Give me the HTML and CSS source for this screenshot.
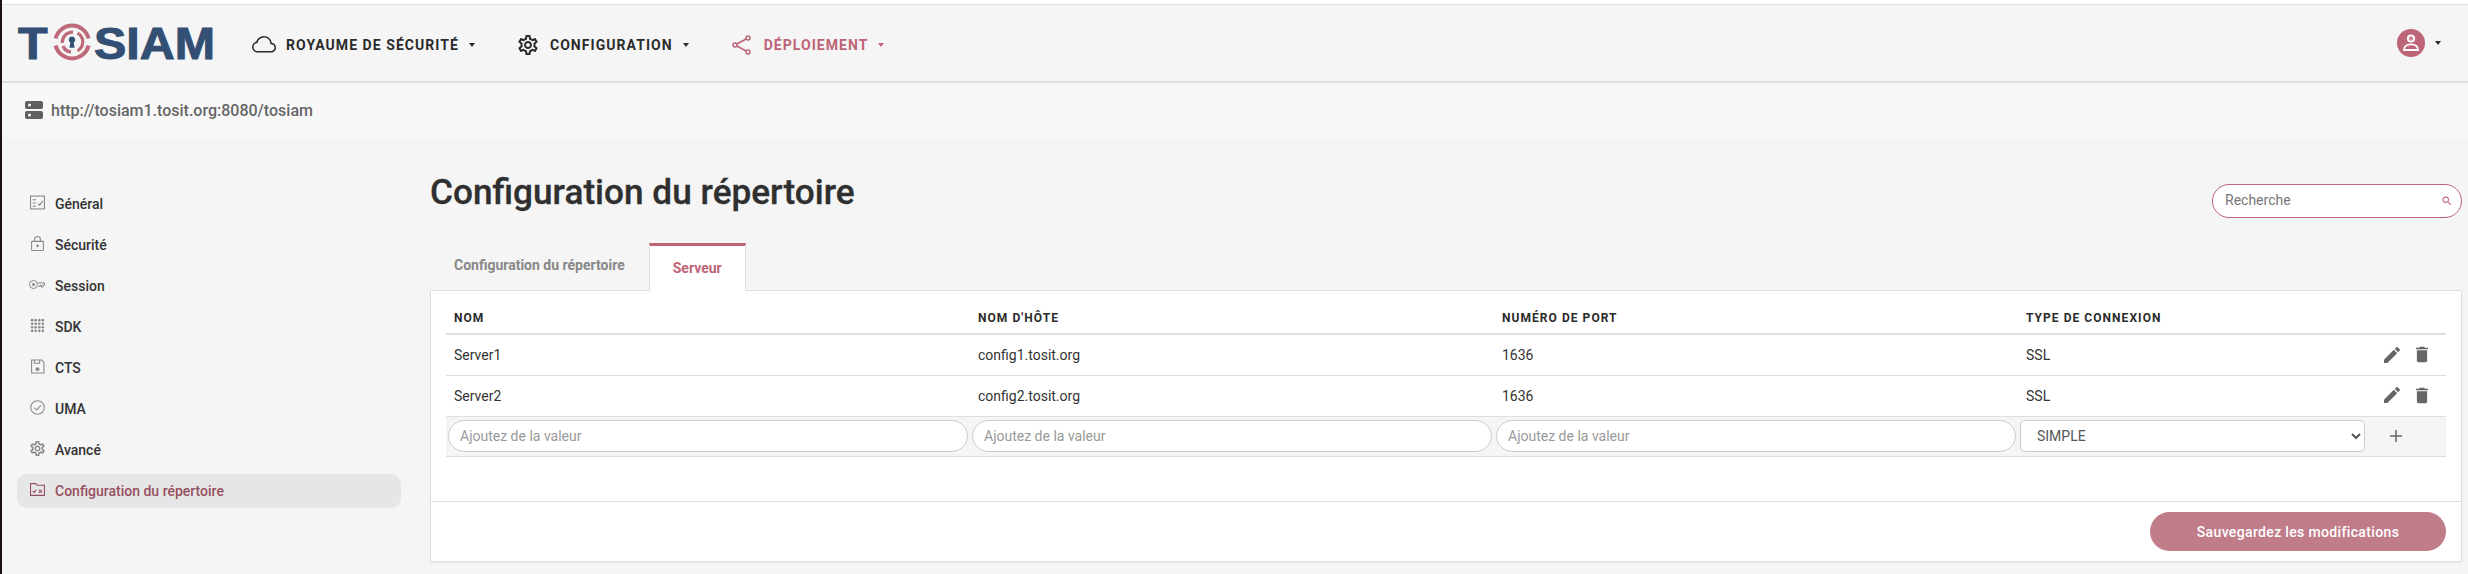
FILE: index.html
```html
<!DOCTYPE html>
<html lang="fr">
<head>
<meta charset="utf-8">
<title>TOSIAM</title>
<link rel="stylesheet" href="styles.css">
</head>
<body>
<div class="page">
  <header class="navbar">
    <a class="logo">
      <span class="logo-text logo-t">T</span>
      <svg class="logo-mark" viewBox="0 0 38 38">
        <g fill="none" stroke="#bf6a7a" stroke-width="4">
          <path d="M2.6 15.5A17 17 0 0 1 35.6 15.5"/>
          <path d="M2.6 22.5A17 17 0 0 0 35.6 22.5"/>
        </g>
        <g fill="none" stroke="#bf6a7a" stroke-width="3.2">
          <path d="M9.4 20A10 10 0 0 1 20 9.1"/>
          <path d="M24.5 10.2A10 10 0 0 1 24.5 27.8"/>
          <path d="M18 29A10 10 0 0 1 9.9 23"/>
        </g>
        <path fill="#334f73" d="M19 13.5a3.3 3.3 0 0 1 1.7 6.1l.8 5.2h-5l.8-5.2a3.3 3.3 0 0 1 1.7-6.1z"/>
      </svg>
      <span class="logo-text logo-rest">SIAM</span>
    </a>
    <nav class="main-nav">
      <a class="nav-item">
        <svg class="nav-icon nav-icon-cloud" viewBox="0 0 16 16"><path fill="currentColor" d="M4.406 3.342A5.53 5.53 0 0 1 8 2c2.69 0 4.923 2 5.166 4.579C14.758 6.804 16 8.137 16 9.773 16 11.569 14.502 13 12.687 13H3.781C1.708 13 0 11.366 0 9.318c0-1.763 1.266-3.223 2.942-3.593.143-.863.698-1.723 1.464-2.383zm.653.757c-.757.653-1.153 1.44-1.153 2.056v.448l-.445.049C2.064 6.805 1 7.952 1 9.318 1 10.785 2.23 12 3.781 12h8.906C13.98 12 15 10.988 15 9.773c0-1.216-1.02-2.228-2.313-2.228h-.5v-.5C12.188 4.825 10.328 3 8 3a4.53 4.53 0 0 0-2.941 1.1z"/></svg>
        <span>ROYAUME DE SÉCURITÉ</span><i class="caret"></i>
      </a>
      <a class="nav-item">
        <svg class="nav-icon" viewBox="2 2 20 20"><path fill="currentColor" d="M19.43 12.98c.04-.32.07-.64.07-.98 0-.34-.03-.66-.07-.98l2.11-1.65c.19-.15.24-.42.12-.64l-2-3.46c-.09-.16-.26-.25-.44-.25-.06 0-.12.01-.17.03l-2.49 1c-.52-.4-1.08-.73-1.69-.98l-.38-2.65C14.46 2.18 14.25 2 14 2h-4c-.25 0-.46.18-.49.42l-.38 2.65c-.61.25-1.17.59-1.69.98l-2.49-1c-.06-.02-.12-.03-.18-.03-.17 0-.34.09-.43.25l-2 3.46c-.13.22-.07.49.12.64l2.11 1.65c-.04.32-.07.65-.07.98 0 .33.03.66.07.98l-2.11 1.65c-.19.15-.24.42-.12.64l2 3.46c.09.16.26.25.44.25.06 0 .12-.01.17-.03l2.49-1c.52.4 1.08.73 1.69.98l.38 2.65c.03.24.24.42.49.42h4c.25 0 .46-.18.49-.42l.38-2.65c.61-.25 1.17-.59 1.69-.98l2.49 1c.06.02.12.03.18.03.17 0 .34-.09.43-.25l2-3.46c.12-.22.07-.49-.12-.64l-2.11-1.65zm-1.98-1.71c.04.31.05.52.05.73 0 .21-.02.43-.05.73l-.14 1.13.89.7 1.08.84-.7 1.21-1.27-.51-1.04-.42-.9.68c-.43.32-.84.56-1.25.73l-1.06.43-.16 1.13-.2 1.35h-1.4l-.19-1.35-.16-1.13-1.06-.43c-.43-.18-.83-.41-1.23-.71l-.91-.7-1.06.43-1.27.51-.7-1.21 1.08-.84.89-.7-.14-1.13c-.03-.31-.05-.54-.05-.74s.02-.43.05-.73l.14-1.13-.89-.7-1.08-.84.7-1.21 1.27.51 1.04.42.9-.68c.43-.32.84-.56 1.25-.73l1.06-.43.16-1.13.2-1.35h1.39l.19 1.35.16 1.13 1.06.43c.43.18.83.41 1.23.71l.91.7 1.06-.43 1.27-.51.7 1.21-1.07.85-.89.7.14 1.13zM12 8c-2.21 0-4 1.79-4 4s1.79 4 4 4 4-1.79 4-4-1.79-4-4-4zm0 6c-1.1 0-2-.9-2-2s.9-2 2-2 2 .9 2 2-.9 2-2 2z"/></svg>
        <span>CONFIGURATION</span><i class="caret"></i>
      </a>
      <a class="nav-item nav-item-active">
        <svg class="nav-icon" viewBox="0 0 20 20"><g fill="none" stroke="currentColor" stroke-width="1.5"><circle cx="16" cy="3" r="2"/><circle cx="3" cy="10" r="2"/><circle cx="16" cy="17" r="2"/><path d="M14.2 4 4.8 9M4.8 11l9.4 5"/></g></svg>
        <span>DÉPLOIEMENT</span><i class="caret"></i>
      </a>
    </nav>
    <div class="user-menu">
      <svg class="avatar" viewBox="0 0 28 28"><circle cx="14" cy="14" r="14" fill="#bd6476"/><circle cx="14" cy="9.5" r="3.2" fill="#c98b98" stroke="#fff" stroke-width="1.8"/><path d="M7 21c0-4 3-5.6 7-5.6s7 1.6 7 5.6z" fill="none" stroke="#fff" stroke-width="1.8"/></svg>
      <i class="caret"></i>
    </div>
  </header>

  <div class="urlbar">
    <svg class="server-icon" viewBox="0 0 18 18"><path fill="#5f5f5f" fill-rule="evenodd" d="M2 0h14a2 2 0 0 1 2 2v4a2 2 0 0 1-2 2H2a2 2 0 0 1-2-2V2a2 2 0 0 1 2-2zm2.5 2.5a1.5 1.5 0 1 0 0 3 1.5 1.5 0 0 0 0-3zM2 10h14a2 2 0 0 1 2 2v4a2 2 0 0 1-2 2H2a2 2 0 0 1-2-2v-4a2 2 0 0 1 2-2zm2.5 2.5a1.5 1.5 0 1 0 0 3 1.5 1.5 0 0 0 0-3z"/></svg>
    <span>http://tosiam1.tosit.org:8080/tosiam</span>
  </div>

  <div class="layout">
    <aside class="sidebar">
      <a class="side-item">
        <svg class="side-icon" viewBox="0 0 14 14"><g fill="none" stroke="currentColor"><rect x=".5" y="1" width="13" height="12"/><path d="M2.5 4.5h3M2.5 7.5h3M2.5 10.5h3M7.5 8l1.5 1.5L12 5.5"/></g></svg>
        <span>Général</span>
      </a>
      <a class="side-item">
        <svg class="side-icon" viewBox="0 0 14 14"><g fill="none" stroke="currentColor"><rect x="1.5" y="5" width="11" height="8.5" rx=".6"/><path d="M4.3 5V3.2a2.7 2.7 0 0 1 5.4 0V5"/></g><circle cx="7" cy="9.2" r="1.2" fill="currentColor"/></svg>
        <span>Sécurité</span>
      </a>
      <a class="side-item">
        <svg class="side-icon side-icon-wide" viewBox="0 0 16 10"><g fill="none" stroke="currentColor"><circle cx="4.5" cy="5" r="4"/><path d="M8.5 3.4h7v2.2h-1.4V7.5h-1.8V5.6h-1.2v1.4H9.2"/></g><circle cx="4.5" cy="5" r="1.5" fill="currentColor"/></svg>
        <span>Session</span>
      </a>
      <a class="side-item">
        <svg class="side-icon" viewBox="0 0 14 14"><g fill="currentColor"><circle cx="2" cy="2" r="1.2"/><circle cx="5.3" cy="2" r="1.2"/><circle cx="8.7" cy="2" r="1.2"/><circle cx="12" cy="2" r="1.2"/><circle cx="2" cy="5.3" r="1.2"/><circle cx="5.3" cy="5.3" r="1.2"/><circle cx="8.7" cy="5.3" r="1.2"/><circle cx="12" cy="5.3" r="1.2"/><circle cx="2" cy="8.7" r="1.2"/><circle cx="5.3" cy="8.7" r="1.2"/><circle cx="8.7" cy="8.7" r="1.2"/><circle cx="12" cy="8.7" r="1.2"/><circle cx="2" cy="12" r="1.2"/><circle cx="5.3" cy="12" r="1.2"/><circle cx="8.7" cy="12" r="1.2"/><circle cx="12" cy="12" r="1.2"/></g></svg>
        <span>SDK</span>
      </a>
      <a class="side-item">
        <svg class="side-icon" viewBox="0 0 14 14"><g fill="none" stroke="currentColor"><path d="M1.500 1h9.500l2 2v10h-11.500z"/><path d="M4 1v3h5V1"/></g><circle cx="7" cy="9.500" r="1.800" fill="currentColor"/></svg>
        <span>CTS</span>
      </a>
      <a class="side-item">
        <svg class="side-icon" viewBox="0 0 14 14"><g fill="none" stroke="currentColor"><circle cx="7" cy="7" r="6.300"/><path d="M4 7.200l2.200 2.200L10.200 5"/></g></svg>
        <span>UMA</span>
      </a>
      <a class="side-item">
        <svg class="side-icon" viewBox="2 2 20 20"><path fill="currentColor" d="M19.43 12.98c.04-.32.07-.64.07-.98 0-.34-.03-.66-.07-.98l2.11-1.65c.19-.15.24-.42.12-.64l-2-3.46c-.09-.16-.26-.25-.44-.25-.06 0-.12.01-.17.03l-2.49 1c-.52-.4-1.08-.73-1.69-.98l-.38-2.65C14.46 2.18 14.25 2 14 2h-4c-.25 0-.46.18-.49.42l-.38 2.65c-.61.25-1.17.59-1.69.98l-2.49-1c-.06-.02-.12-.03-.18-.03-.17 0-.34.09-.43.25l-2 3.46c-.13.22-.07.49.12.64l2.11 1.65c-.04.32-.07.65-.07.98 0 .33.03.66.07.98l-2.11 1.65c-.19.15-.24.42-.12.64l2 3.46c.09.16.26.25.44.25.06 0 .12-.01.17-.03l2.49-1c.52.4 1.08.73 1.69.98l.38 2.65c.03.24.24.42.49.42h4c.25 0 .46-.18.49-.42l.38-2.65c.61-.25 1.17-.59 1.69-.98l2.49 1c.06.02.12.03.18.03.17 0 .34-.09.43-.25l2-3.46c.12-.22.07-.49-.12-.64l-2.11-1.65zm-1.98-1.71c.04.31.05.52.05.73 0 .21-.02.43-.05.73l-.14 1.13.89.7 1.08.84-.7 1.21-1.27-.51-1.04-.42-.9.68c-.43.32-.84.56-1.25.73l-1.06.43-.16 1.13-.2 1.35h-1.4l-.19-1.35-.16-1.13-1.06-.43c-.43-.18-.83-.41-1.23-.71l-.91-.7-1.06.43-1.27.51-.7-1.21 1.08-.84.89-.7-.14-1.13c-.03-.31-.05-.54-.05-.74s.02-.43.05-.73l.14-1.13-.89-.7-1.08-.84.7-1.21 1.27.51 1.04.42.9-.68c.43-.32.84-.56 1.25-.73l1.06-.43.16-1.13.2-1.35h1.39l.19 1.35.16 1.13 1.06.43c.43.18.83.41 1.23.71l.91.7 1.06-.43 1.27-.51.7 1.21-1.07.85-.89.7.14 1.13zM12 8c-2.21 0-4 1.79-4 4s1.79 4 4 4 4-1.79 4-4-1.79-4-4-4zm0 6c-1.1 0-2-.9-2-2s.9-2 2-2 2 .9 2 2-.9 2-2 2z"/></svg>
        <span>Avancé</span>
      </a>
      <a class="side-item side-item-active">
        <svg class="side-icon" viewBox="0 0 14 14"><g fill="none" stroke="currentColor"><path d="M.5 12.500V1.500h5l1.200 1.500h6.800v9.500z"/><path d="M2.500 8.500l1.300 1.300 2-2.500M8.300 7.300l2.800 2.800M11.100 7.300l-2.800 2.800"/></g></svg>
        <span>Configuration du répertoire</span>
      </a>
    </aside>

    <main class="content">
      <div class="content-head">
        <h1>Configuration du répertoire</h1>
        <label class="search">
          <input type="text" placeholder="Recherche">
          <svg class="search-icon" viewBox="0 0 24 24"><path fill="currentColor" d="M15.500 14h-.79l-.28-.27A6.471 6.471 0 0 0 16 9.500 6.500 6.500 0 1 0 9.500 16c1.610 0 3.090-.59 4.230-1.570l.27.28v.79l5 4.990L20.490 19l-4.990-5zm-6 0C7.010 14 5 11.990 5 9.500S7.010 5 9.500 5 14 7.010 14 9.500 11.990 14 9.500 14z"/></svg>
        </label>
      </div>
      <div class="tabs">
        <a class="tab">Configuration du répertoire</a>
        <a class="tab tab-active">Serveur</a>
      </div>
      <section class="card">
        <div class="card-body">
          <table class="grid">
            <colgroup>
              <col class="col-main"><col class="col-main"><col class="col-main"><col><col class="col-actions">
            </colgroup>
            <thead>
              <tr><th>NOM</th><th>NOM D'HÔTE</th><th>NUMÉRO DE PORT</th><th>TYPE DE CONNEXION</th><th></th></tr>
            </thead>
            <tbody>
              <tr>
                <td>Server1</td><td>config1.tosit.org</td><td>1636</td><td>SSL</td>
                <td class="actions">
                  <svg class="act-icon" viewBox="3 3 18 18"><path fill="currentColor" d="M3 17.250V21h3.750L17.810 9.940l-3.750-3.750L3 17.250zM20.710 7.040c.39-.39.39-1.020 0-1.410l-2.340-2.340c-.39-.39-1.020-.39-1.410 0l-1.830 1.830 3.750 3.750 1.830-1.830z"/></svg>
                  <svg class="act-icon act-trash" viewBox="5 3 14 18"><path fill="currentColor" d="M6 19c0 1.100.9 2 2 2h8c1.100 0 2-.9 2-2V7H6v12zM19 4h-3.500l-1-1h-5l-1 1H5v2h14V4z"/></svg>
                </td>
              </tr>
              <tr>
                <td>Server2</td><td>config2.tosit.org</td><td>1636</td><td>SSL</td>
                <td class="actions">
                  <svg class="act-icon" viewBox="3 3 18 18"><path fill="currentColor" d="M3 17.250V21h3.750L17.810 9.940l-3.750-3.750L3 17.250zM20.710 7.040c.39-.39.39-1.020 0-1.410l-2.340-2.340c-.39-.39-1.020-.39-1.410 0l-1.830 1.830 3.750 3.750 1.830-1.830z"/></svg>
                  <svg class="act-icon act-trash" viewBox="5 3 14 18"><path fill="currentColor" d="M6 19c0 1.100.9 2 2 2h8c1.100 0 2-.9 2-2V7H6v12zM19 4h-3.500l-1-1h-5l-1 1H5v2h14V4z"/></svg>
                </td>
              </tr>
              <tr class="add-row">
                <td><input class="field" type="text" placeholder="Ajoutez de la valeur"></td>
                <td><input class="field" type="text" placeholder="Ajoutez de la valeur"></td>
                <td><input class="field" type="text" placeholder="Ajoutez de la valeur"></td>
                <td><select class="field-select"><option>SIMPLE</option><option>SSL</option></select></td>
                <td class="actions-add"><svg class="plus-icon" viewBox="0 0 14 14"><path fill="none" stroke="currentColor" stroke-width="1.500" d="M7 1v12M1 7h12"/></svg></td>
              </tr>
            </tbody>
          </table>
        </div>
        <div class="card-footer">
          <button class="save-btn" type="button">Sauvegardez les modifications</button>
        </div>
      </section>
    </main>
  </div>
</div>
</body>
</html>
```

FILE: styles.css
```css
* { box-sizing: border-box; }
html, body { margin: 0; padding: 0; }
body {
  font-family: Roboto, "Liberation Sans", sans-serif;
  background: #fff;
  color: #333;
  height: 574px;
  overflow: hidden;
}
.page {
  border-left: 2px solid #1b1219;
  height: 574px;
  padding-top: 4px;
  background: #f5f5f5 content-box;
  display: flex;
  flex-direction: column;
}
.navbar {
  height: 79px;
  flex: none;
  border-top: 1px solid #e0e0e0;
  border-bottom: 2px solid #dedede;
  background: #f5f5f5;
  display: flex;
  align-items: center;
  padding: 3px 27px 0 16px;
}
.logo {
  display: flex;
  align-items: center;
  width: 234px;
  flex: none;
  color: #334f73;
  margin-top: -2px;
}
.logo-text {
  display: block;
  font-family: "Liberation Sans", Arial, sans-serif;
  font-weight: 700;
  font-size: 44px;
  line-height: 44px;
  -webkit-text-stroke: 1px #334f73;
  transform-origin: left center;
}
.logo-t { width: 35px; flex: none; transform: scaleX(1.1); }
.logo-rest { margin-left: 3px; transform: scaleX(1.1); }
.logo-mark { width: 38px; height: 38px; flex: none; margin-top: -3px; }
.main-nav { display: flex; align-items: center; gap: 43px; flex: 1; }
.nav-item {
  display: flex;
  align-items: center;
  color: #2b2b2b;
  font-size: 14px;
  font-weight: 700;
  letter-spacing: 1.05px;
}
.nav-item-active { color: #bd6476; }
.nav-icon { width: 20px; height: 20px; margin-right: 12px; flex: none; }
.nav-icon-cloud { width: 24px; height: 24px; margin-right: 10px; }
.caret {
  display: block;
  margin-left: 10px;
  width: 0;
  height: 0;
  border-left: 3.5px solid transparent;
  border-right: 3.5px solid transparent;
  border-top: 4px solid currentColor;
}
.user-menu { display: flex; align-items: center; color: #2b2b2b; margin-top: -3px; }
.avatar { width: 28px; height: 28px; }
.user-menu .caret { margin-left: 10px; }
.urlbar {
  height: 55px;
  flex: none;
  background: #f8f8f8;
  display: flex;
  align-items: center;
  padding-left: 23px;
  padding-bottom: 1px;
  color: #666;
  font-size: 16px;
  font-weight: 500;
}
.server-icon { width: 18px; height: 18px; margin-right: 8px; flex: none; }
.layout { flex: 1; display: flex; min-height: 0; }
.sidebar {
  width: 428px;
  flex: none;
  padding: 49px 29px 0 15px;
  display: flex;
  flex-direction: column;
  gap: 7px;
}
.side-item {
  height: 34px;
  display: flex;
  align-items: center;
  padding-left: 13px;
  border-radius: 10px;
  font-size: 14px;
  font-weight: 500;
  color: #333;
}
.side-item > span { margin-left: 10px; }
.side-icon { width: 15px; height: 15px; color: #888; flex: none; margin-top: -4px; }
.side-icon-wide { width: 16px; margin-left: -1px; }
.side-item-active { background: #e6e6e6; color: #964f5f; }
.side-item-active .side-icon { color: #964f5f; }
.content { flex: 1; min-width: 0; padding: 30px 6px 0 0; }
.content-head {
  height: 75px;
  display: flex;
  justify-content: space-between;
  align-items: flex-start;
}
h1 {
  margin: 0;
  font-size: 35.2px;
  line-height: 48px;
  font-weight: 500;
  color: #2f2f2f;
  -webkit-text-stroke: .3px #2f2f2f;
}
.search {
  width: 250px;
  height: 34px;
  margin-top: 16px;
  border: 1px solid #bd6476;
  border-radius: 17px;
  background: #fff;
  display: flex;
  align-items: center;
  padding: 0 8px 0 12px;
  color: #bd6476;
}
.search input {
  flex: 1;
  min-width: 0;
  border: 0;
  outline: 0;
  background: transparent;
  font: 400 14px Roboto, sans-serif;
  margin-top: -2px;
  padding: 0;
}
.search input::placeholder { color: #777; opacity: 1; }
.search-icon { width: 12px; height: 12px; flex: none; }
.tabs { display: flex; height: 47px; position: relative; z-index: 1; }
.tab {
  padding: 12px 24px 0;
  font-size: 14px;
  line-height: 20px;
  font-weight: 700;
  color: #888;
}
.tab-active {
  height: 48px;
  border: 1px solid #dedede;
  border-top: 3px solid #bd6476;
  border-bottom: 0;
  background: #fff;
  padding: 12px 23px 0;
  color: #bd6476;
}
.card {
  height: 272px;
  background: #fff;
  border: 1px solid #dedede;
  box-shadow: 0 1px 2px rgba(0,0,0,.06);
}
.card-body { height: 211px; padding: 0 15px; border-bottom: 1px solid #dedede; }
.grid { width: 100%; table-layout: fixed; border-collapse: collapse; }
.col-main { width: 524px; }
.col-actions { width: 79px; }
.grid th {
  height: 43px;
  padding: 12px 8px 0;
  text-align: left;
  font-size: 12px;
  font-weight: 700;
  letter-spacing: 1.05px;
  color: #2b2b2b;
  border-bottom: 2px solid #dedede;
}
.grid td {
  height: 41px;
  padding: 0 8px;
  font-size: 14px;
  color: #333;
  border-bottom: 1px solid #dedede;
}
.grid .actions { padding: 0 18px 0 0; text-align: right; white-space: nowrap; color: #666; }
.act-icon { width: 16px; height: 16px; vertical-align: middle; margin-top: -2px; }
.act-trash { width: 12px; height: 17px; margin-left: 13px; }
.add-row td { background: #f5f5f5; height: 40px; padding: 0 2px; }
.field {
  display: block;
  width: 100%;
  height: 32px;
  border: 1px solid #ccc;
  border-radius: 16px;
  background: #fff;
  padding: 0 11px;
  font: 400 14px Roboto, sans-serif;
  outline: 0;
}
.field::placeholder { color: #999; opacity: 1; }
.field-select {
  display: block;
  width: 100%;
  height: 32px;
  border: 1px solid #ccc;
  border-radius: 5px;
  background: #fff;
  padding: 0 12px;
  font: 400 14px Roboto, sans-serif;
  color: #555;
}
.grid .actions-add { color: #666; text-align: left; padding-left: 22px; }
.plus-icon { display: block; width: 14px; height: 14px; }
.card-footer { display: flex; justify-content: flex-end; padding: 10px 15px; }
.save-btn {
  width: 296px;
  height: 39px;
  border: 0;
  border-radius: 20px;
  background: #c17c8a;
  color: #fff;
  font: 500 14px Roboto, sans-serif;
  letter-spacing: .35px;
}
```
